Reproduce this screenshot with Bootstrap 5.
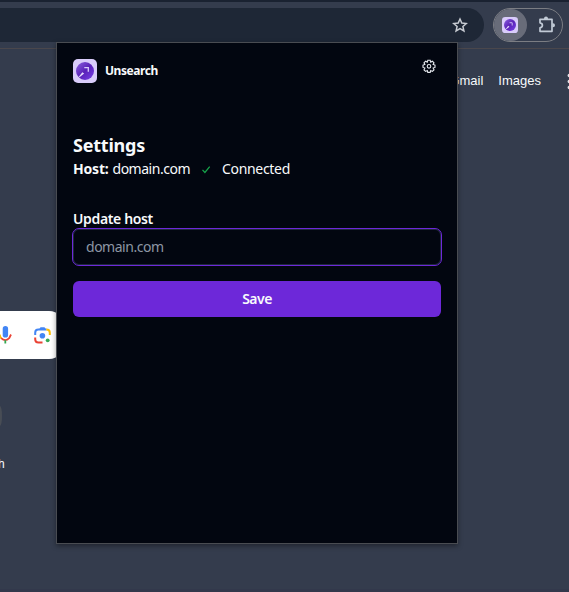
<!DOCTYPE html>
<html lang="en">
<head>
<meta charset="utf-8">
<meta name="viewport" content="width=device-width, initial-scale=1">
<title>Unsearch</title>
<link href="https://cdn.jsdelivr.net/npm/bootstrap@5.3.0/dist/css/bootstrap.min.css" rel="stylesheet">
<style>
body{background:#343c4d;font-family:"Noto Sans","Open Sans",sans-serif;font-size:14px;line-height:20px;color:#f8fafc}
svg{display:block;flex:none}
.browser{height:592px;border-bottom:3px solid #32384b}
.toolbar{height:49px;border-top:2px solid #1a2231;border-bottom:1px solid #4a474c;padding:6px 6px 6px 0;gap:9px}
.omnibox{height:34px;background:#1e2736;border-radius:0 17px 17px 0;padding-right:16px}
.ext-pill{width:70px;height:34px;border:1px solid #7b7d83;border-radius:17px}
.ext-active{width:33px;background:#686c79;border-radius:16px;padding-right:2px}
.puzzle{padding-left:5px}
.google-links{font:13px/18px "Liberation Sans",Arial,sans-serif;margin-top:23px;gap:15px}
.searchbar{width:65px;height:48px;margin-top:221px;background:#fff;border-radius:0 16px 16px 0}
.tile{width:2px;height:20px;margin-top:47px;background:#484d55;border-radius:0 2px 2px 0/0 10px 10px 0}
.tile-label{font:12px/16px "Liberation Sans",Arial,sans-serif;margin:30px 0 0 -2px}
.popup{left:56px;top:42px;width:402px;height:502px;background:#020610;border:1px solid #494c52;padding:16px 15px 0 16px;box-shadow:0 2px 5px #0006}
.brand{font-size:12px;font-weight:700;letter-spacing:-.45px;gap:8px}
.brand-row{height:24px}
.gear{margin-right:5px}
.title{font-size:18px;line-height:28px;font-weight:700;letter-spacing:-.22px;margin:48px 0 0}
.status{white-space:nowrap}
.host-name{letter-spacing:-.48px}
.host-name.conn{letter-spacing:-.32px}
.host-label{font-weight:700;letter-spacing:-.2px;margin-right:4px}
.field-label{font-weight:600;letter-spacing:-.36px;margin-top:30px;display:block;line-height:20px}
.popup .form-control{width:370px;height:38px;margin:-1px 0 0 -1px;background:#020610;border:1px solid #6d28d9;box-shadow:inset 0 0 0 1px #1e293b;border-radius:7px;padding:0 13px 2px;font-size:14px;color:#fff;letter-spacing:-.48px}
.popup .form-control::placeholder{color:#8d96a4;opacity:1}
.btn-save{height:36px;width:368px;margin-top:15px;background:#6d28d9;color:#f8fafc;border:0;border-radius:6px;font-size:14px;line-height:20px;font-weight:600;padding:0;letter-spacing:-.5px}
</style>
</head>
<body class="overflow-hidden">
<svg width="0" height="0" class="position-absolute">
<defs>
<linearGradient id="orb" x1="0" y1="0" x2="1" y2="1"><stop offset="0" stop-color="#8b60df"/><stop offset=".5" stop-color="#5a22b8"/><stop offset="1" stop-color="#7840ea"/></linearGradient>
<symbol id="logo" viewBox="0 0 24 24"><rect width="24" height="24" rx="5" fill="#d9ccfb"/><circle cx="12" cy="12" r="9" fill="url(#orb)"/><path d="M4 20.3 9.3 13.2 11.2 14.6Z" fill="#e7ddff"/><path d="M3.5 17.2 7 20.5 4 21Z" fill="#d9ccfb"/><path d="M11.3 8.6H15.3V12.8" fill="none" stroke="#d9ccfb" stroke-width="1.3"/></symbol>
</defs>
</svg>
<div class="browser position-relative overflow-hidden">
  <header class="toolbar d-flex">
    <div class="omnibox flex-grow-1 d-flex align-items-center justify-content-end">
      <svg width="16" height="16" viewBox="0 0 16 16" fill="none" stroke="#c8ccd3" stroke-width="1.5"><path d="m8 2 1.8 4.1 4.5.4-3.4 3 1 4.4L8 11.6l-3.9 2.3 1-4.4-3.4-3 4.5-.4Z"/></svg>
    </div>
    <div class="ext-pill d-flex">
      <div class="ext-active d-flex align-items-center justify-content-center"><svg width="16" height="16"><use href="#logo"/></svg></div>
      <div class="puzzle flex-grow-1 d-flex align-items-center justify-content-center"><svg width="18" height="18" viewBox="0 0 18 18"><path d="M2 3.3H14V15.3H2V11.8Q4.4 11.4 4.4 9.3T2 6.8Z" fill="none" stroke="#c1cad6" stroke-width="1.7" stroke-linejoin="round"/><path d="M6 3V2.4A2 2 0 0 1 10 2.4V3ZM14.3 7.3H15A2 2 0 0 1 15 11.3H14.3Z" fill="#c1cad6"/></svg></div>
    </div>
  </header>
  <nav class="google-links d-flex justify-content-end align-items-center">
    <span>Gmail</span><span>Images</span>
    <svg width="13" height="18" viewBox="0 0 13 18" fill="#e3e5e8"><circle cx="13.3" cy="3.5" r="1.7"/><circle cx="13.3" cy="9.5" r="1.7"/><circle cx="13.3" cy="15.5" r="1.7"/></svg>
  </nav>
  <div class="searchbar d-flex align-items-center">
    <svg width="52" height="24" viewBox="0 0 52 24">
      <rect x="2.7" y="3" width="5.4" height="11.6" rx="2.7" fill="#4285f4"/>
      <path d="M-.2 11.5Q0 14 1.5 15.6" fill="none" stroke="#fbbc04" stroke-width="1.8"/><path d="M1.2 15.2Q5.3 19 9.2 15.2L11 11.5" fill="none" stroke="#ea4335" stroke-width="1.8"/><path d="M5.3 17.2V20.5" stroke="#34a853" stroke-width="1.8"/>
      <g fill="none" stroke-width="2" transform="translate(0 .6)"><path d="M35.2 11.5V9.2Q35.2 6 38.4 6H46.5" stroke="#4285f4"/><path d="M46.3 6Q49.8 6 49.8 9.2V11.5" stroke="#fbbc04"/><path d="M35.2 14V15.6Q35.2 18.8 38.4 18.8H42.5" stroke="#ea4335"/></g>
      <path d="M39 6.6 40.5 4.2H44.5L46 6.6Z" fill="#4285f4"/><circle cx="42.4" cy="12.8" r="2.8" fill="#4285f4"/><circle cx="47.7" cy="17.3" r="1.9" fill="#34a853"/>
    </svg>
  </div>
  <div class="tile"></div>
  <div class="tile-label">h</div>

  <main class="popup position-absolute">
    <div class="brand-row d-flex justify-content-between">
      <div class="brand d-flex align-items-center"><svg width="24" height="24"><use href="#logo"/></svg><span>Unsearch</span></div>
      <svg class="gear" width="16" height="16" viewBox="0 0 16 16" fill="none" stroke="#e7eaf0" stroke-width="1.1"><path d="M6.8 1.3h2.4l.5 1.8 1.7-.9 1.6 1.6-.9 1.7 1.9.6v2.3l-1.9.6.9 1.8-1.6 1.6-1.7-.9-.5 1.9H6.8l-.5-1.9-1.7.9L3 10.8 3.9 9 2 8.4V6.1l1.9-.6L3 3.8l1.6-1.6 1.7.9Z"/><circle cx="8" cy="7.3" r="1.8"/></svg>
    </div>
    <h1 class="title">Settings</h1>
    <div class="status d-flex align-items-center">
      <span class="host-label">Host:</span><span class="host-name">domain.com</span>
      <svg class="mx-2" width="16" height="16" viewBox="0 0 16 16"><path d="M4.5 8.9 6.9 11.4 11.7 5.6" fill="none" stroke="#16a34a" stroke-width="1.3"/></svg>
      <span class="host-name conn">Connected</span>
    </div>
    <label class="field-label" for="host">Update host</label>
    <input id="host" class="form-control" type="text" placeholder="domain.com">
    <button class="btn btn-save d-block" type="button">Save</button>
  </main>
</div>
<script src="https://cdn.jsdelivr.net/npm/bootstrap@5.3.0/dist/js/bootstrap.bundle.min.js"></script>
</body>
</html>
